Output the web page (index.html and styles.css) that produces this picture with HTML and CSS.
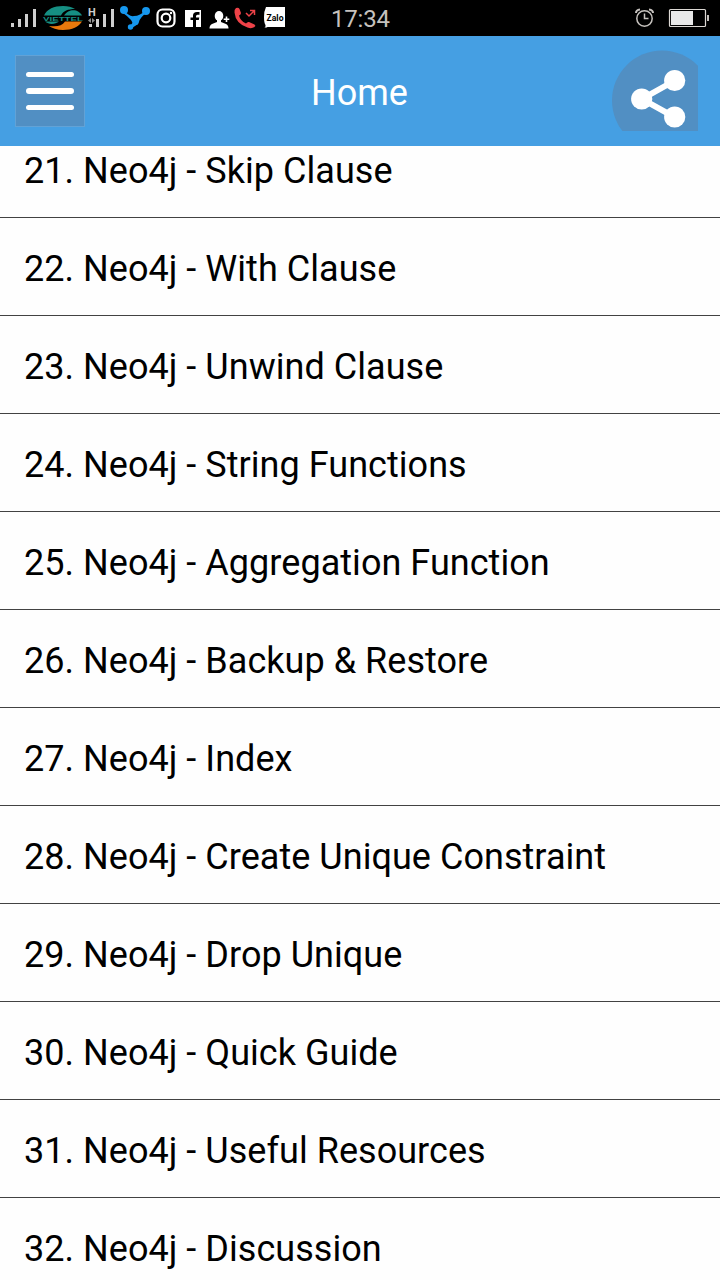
FILE: index.html
```html
<!DOCTYPE html>
<html lang="en">
<head>
    <meta charset="UTF-8">
    <meta name="viewport" content="width=device-width, initial-scale=1.0">
    <title>Home</title>
    <link rel="stylesheet" href="styles.css">
</head>
<body>
    <!-- Status bar -->
    <div class="status-bar">
        <div class="status-icons">
            <!-- Signal, SIM 1 -->
            <svg width="28" height="36" viewBox="10 0 28 36" fill="#cfcfcf">
                <path d="M11 23h3v4h-3zM18 19h3v8h-3zM25 14h3v13h-3zM33 9h3v18h-3z"/>
            </svg>
            <!-- Carrier logo -->
            <svg width="48" height="36" viewBox="38 0 48 36">
                <path d="M44 15.500C47 9 54 6 63 6c5 0 9 1 12 3-7 0-12 2-14 6.500z" fill="#168f83"/>
                <path d="M64 15.500c3-5 8-6 12-5 3 1 5 3 6 5z" fill="#168f83"/>
                <path d="M45 21.500h14c-4 3-10 3.500-14 0z" fill="#168f83"/>
                <path d="M65 21.500h17c-3 5-10 8.500-19 8.500-6 0-11-2-14-4 8 1 13 0 16-4.500z" fill="#e8790c"/>
                <text x="43" y="20.700" class="carrier" textLength="40" lengthAdjust="spacingAndGlyphs">VIETTEL</text>
            </svg>
            <!-- Signal, SIM 2 -->
            <svg width="31" height="36" viewBox="86 0 31 36" fill="#cfcfcf">
                <text x="88" y="16" class="network">H</text>
                <path d="M88 20.500l3-2.500v5zM95 20.500l-3-2.500v5z" fill="#8f8f8f"/>
                <path d="M89 24h3v3h-3zM96 19h3v8h-3zM103 14h3v13h-3zM111 9h3v18h-3z"/>
            </svg>
            <!-- Molecule -->
            <svg width="36" height="36" viewBox="117 0 36 36" fill="#1698ef">
                <path d="M124 10q5 7 10 6 6 0 12-6l2 2q-8 5-9 10-1 4-6 3 0-5-10-12z"/>
                <circle cx="124" cy="10" r="4"/>
                <circle cx="146" cy="11" r="4"/>
                <circle cx="130.500" cy="27" r="2.700"/>
                <path d="M130 26l5-6 3 4-6 4z"/>
            </svg>
            <!-- Instagram -->
            <svg width="27" height="36" viewBox="153 0 27 36" fill="none" stroke="#fff" stroke-width="2.200">
                <rect x="157.500" y="9.500" width="17" height="17" rx="5"/>
                <circle cx="166" cy="18" r="4.300"/>
                <circle cx="171" cy="13" r="1.200" fill="#fff" stroke="none"/>
            </svg>
            <!-- Facebook -->
            <svg width="26" height="36" viewBox="180 0 26 36">
                <rect x="185" y="10" width="16" height="17" fill="#fff"/>
                <path d="M193 27v-7h-2.500v-2.500h2.500V15.500q0-3.500 4-3.500h2.500v2.700h-2q-1.500 0-1.500 1.500v1.300h3.300l-.5 2.500H196v7z" fill="#000"/>
            </svg>
            <!-- Add contact -->
            <svg width="26" height="36" viewBox="206 0 26 36" fill="#fff">
                <ellipse cx="219" cy="16" rx="4.300" ry="5"/>
                <path d="M217 18h4v4l5 2q2.500 1 2.500 4.500h-19q0-3.500 2.500-4.500l5-2z"/>
                <path d="M225.700 16.500h1.600v2h2v1.600h-2v2h-1.600v-2h-2v-1.600h2z"/>
            </svg>
            <!-- Outgoing call -->
            <svg width="28" height="36" viewBox="232 0 28 36">
                <path d="M236 8q2.500-1 3.500 1l1.500 4q0 1.500-2 2.500 1 5 7 8 1.500-2 3-1.500l5.500 2.500q1.500 1 0 2.500-3 2-7 .5-12-4-13-15-.5-3 1.500-4.500z" fill="#ee4248"/>
                <path d="M246 13l3 3 5-5M250 10.500h4.500V15" fill="none" stroke="#ee4248" stroke-width="1.500"/>
            </svg>
            <!-- Zalo -->
            <svg width="28" height="36" viewBox="260 0 28 36">
                <path d="M266 7h19v20h-17.500q-1 .8-3 .5 1.500-1 1-2.500Q264 23 264 17t2-10z" fill="#fff"/>
                <text x="266.500" y="20.500" class="zalo" textLength="17" lengthAdjust="spacingAndGlyphs">Zalo</text>
            </svg>
        </div>
        <div class="clock">17:34</div>
        <div class="status-right">
            <!-- Alarm -->
            <svg width="22" height="36" viewBox="634 0 22 36" fill="none" stroke="#c6c2be" stroke-width="1.500">
                <circle cx="644.500" cy="18.500" r="7.700"/>
                <path d="M644.500 13.500v5h4"/>
                <path d="M636 13q0-3 4-3.500M653 13q0-3-4-3.500" stroke-width="2"/>
            </svg>
            <!-- Battery -->
            <svg width="42" height="36" viewBox="668 0 42 36">
                <rect x="669.500" y="9.500" width="36" height="17" rx="1" fill="none" stroke="#dcd8d4" stroke-width="1.200"/>
                <rect x="671" y="11" width="22" height="14" fill="#e8e8e8"/>
                <rect x="707" y="15" width="2" height="6" fill="#c6c2be"/>
            </svg>
        </div>
    </div>

    <!-- Header -->
    <header class="header">
        <button class="menu-button" aria-label="Menu">
            <span class="menu-line"></span>
            <span class="menu-line"></span>
            <span class="menu-line"></span>
        </button>
        <h1>Home</h1>
        <button class="share-button" aria-label="Share">
            <svg width="86" height="81" viewBox="612 49 86 81">
                <circle cx="662" cy="99.500" r="50" fill="#518fc3"/>
                <path d="M675 79.500L642 98l33 18.300" fill="none" stroke="#fff" stroke-width="6"/>
                <g fill="#fff">
                    <circle cx="641.700" cy="98" r="10.600"/>
                    <circle cx="674.700" cy="79.500" r="10.600"/>
                    <circle cx="674.700" cy="116" r="10.600"/>
                </g>
            </svg>
        </button>
    </header>

    <!-- Chapters -->
    <main class="content">
        <ul class="chapters">
            <li>21. Neo4j - Skip Clause</li>
            <li>22. Neo4j - With Clause</li>
            <li>23. Neo4j - Unwind Clause</li>
            <li>24. Neo4j - String Functions</li>
            <li>25. Neo4j - Aggregation Function</li>
            <li>26. Neo4j - Backup &amp; Restore</li>
            <li>27. Neo4j - Index</li>
            <li>28. Neo4j - Create Unique Constraint</li>
            <li>29. Neo4j - Drop Unique</li>
            <li>30. Neo4j - Quick Guide</li>
            <li>31. Neo4j - Useful Resources</li>
            <li>32. Neo4j - Discussion</li>
        </ul>
    </main>
</body>
</html>
```
FILE: styles.css
```css
* {
    box-sizing: border-box;
}

body {
    margin: 0;
    height: 100vh;
    display: flex;
    flex-direction: column;
    overflow: hidden;
    font-family: Roboto, sans-serif;
    background-color: #fefefe;
}

svg {
    display: block;
    flex: none;
}

/* Status bar */
.status-bar {
    flex: none;
    display: flex;
    height: 36px;
    padding: 0 10px;
    background-color: #000;
}

.status-icons,
.status-right {
    display: flex;
}

.status-right {
    gap: 12px;
    margin-left: auto;
}

.carrier {
    font-family: "Liberation Sans", sans-serif;
    font-size: 6px;
    font-weight: bold;
    fill: #168f83;
}

.network {
    font-size: 11px;
    font-weight: bold;
}

.zalo {
    font-size: 9.5px;
    font-weight: bold;
    fill: #000;
}

.clock {
    margin-left: 43px;
    font-size: 24px;
    letter-spacing: -0.2px;
    line-height: 38px;
    color: #c6c2be;
}

/* Header */
.header {
    flex: none;
    display: flex;
    align-items: center;
    justify-content: space-between;
    height: 110px;
    padding: 0 22px 0 15px;
    background-color: #459fe3;
}

.header button {
    padding: 0;
    border: none;
    background: none;
}

.header .menu-button {
    display: flex;
    flex-direction: column;
    align-items: center;
    justify-content: center;
    gap: 11px;
    width: 70px;
    height: 72px;
    border: 1px solid #62a2d6;
    background-color: #518fc3;
}

.menu-line {
    width: 48px;
    height: 5.5px;
    border-radius: 3px;
    background-color: #fff;
}

.header h1 {
    margin: 4px 0 0 22px;
    font-size: 36px;
    font-weight: normal;
    line-height: 42px;
    color: #fff;
}

.share-button {
    margin-bottom: 2px;
}

/* Chapters */
.content {
    flex: 1;
    min-height: 0;
    overflow: hidden;
}

.chapters {
    margin: -26px 0 0;
    padding: 0;
    list-style: none;
}

.chapters li {
    height: 98px;
    padding: 5px 24px 0;
    border-bottom: 1px solid #424242;
    font-size: 36px;
    letter-spacing: 0.04px;
    line-height: 93px;
    color: #000;
}
```
